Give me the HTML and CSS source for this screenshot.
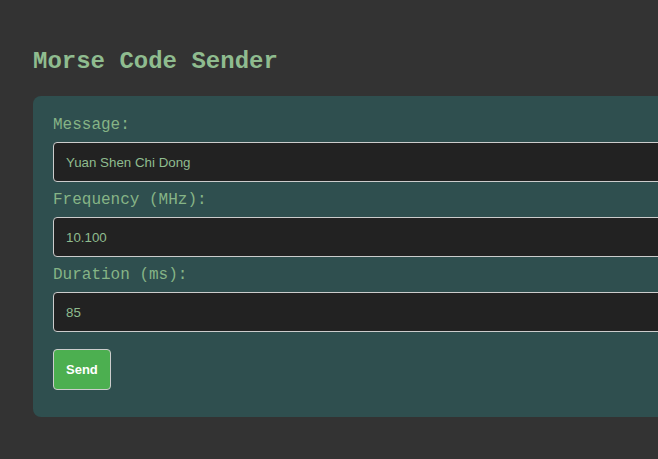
FILE: index.html
```html
<!DOCTYPE html>
<html lang="en">
<head>
<meta charset="utf-8">
<title>Morse Code Sender</title>
<link rel="stylesheet" href="styles.css">
</head>
<body>
  <h1 class="title">Morse Code Sender</h1>
  <form class="panel">
    <label class="field-label" for="msg">Message:</label>
    <input class="field" id="msg" type="text" value="Yuan Shen Chi Dong">
    <label class="field-label" for="freq">Frequency (MHz):</label>
    <input class="field" id="freq" type="text" value="10.100">
    <label class="field-label" for="dur">Duration (ms):</label>
    <input class="field" id="dur" type="text" value="85">
    <button class="send" type="button">Send</button>
  </form>
</body>
</html>
```
FILE: styles.css
```css
html, body {
  overflow: hidden;
}
body {
  margin: 0;
  padding: 33px;
  background: #333333;
  font-family: "Liberation Mono", "Courier New", monospace;
  color: #8fbc8f;
}
.title {
  margin: 15px 0 20px;
  font-family: "Liberation Mono", "Courier New", monospace;
  font-size: 24px;
  font-weight: 700;
  line-height: 28px;
  color: #8fbc8f;
  white-space: nowrap;
}
.panel {
  box-sizing: border-box;
  width: 820px;
  padding: 20px 20px 27px;
  background: #2f4f4f;
  border-radius: 8px;
}
.field-label {
  display: block;
  margin-bottom: 8px;
  font-family: "Liberation Mono", "Courier New", monospace;
  font-size: 16px;
  line-height: 18px;
  color: #86b486;
}
.field {
  display: block;
  box-sizing: border-box;
  width: 100%;
  height: 40px;
  margin: 0 0 9px;
  padding: 0 12px;
  background: #222222;
  border: 1px solid #cccccc;
  border-radius: 4px;
  color: #8fbc8f;
  font-family: "Liberation Sans", Arial, sans-serif;
  font-size: 13.33px;
  outline: none;
}
.send {
  display: block;
  box-sizing: border-box;
  height: 41px;
  margin-top: 17px;
  padding: 0 12px;
  background: #4caf50;
  border: 1px solid #cccccc;
  border-radius: 4px;
  color: #ffffff;
  font-family: "Liberation Sans", Arial, sans-serif;
  font-size: 13px;
  font-weight: 700;
  cursor: pointer;
}
```
